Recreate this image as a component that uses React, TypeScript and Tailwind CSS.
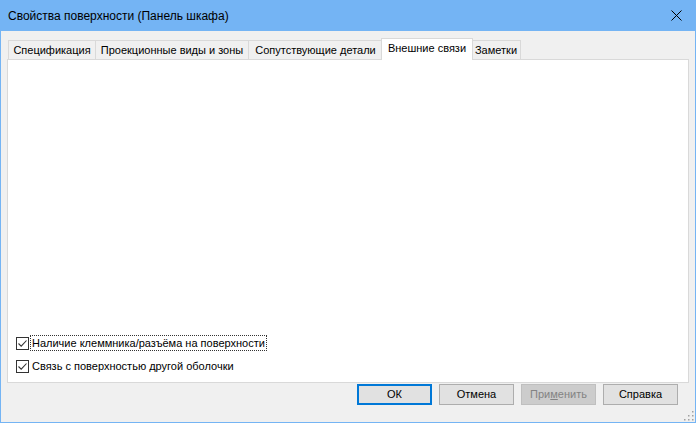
import React from 'react'

const FONT = { fontFamily: '"Liberation Sans", Arial, sans-serif' }

const TABS = [
  { label: 'Спецификация', w: 'w-[88px]' },
  { label: 'Проекционные виды и зоны', w: 'w-[154px]' },
  { label: 'Сопутствующие детали', w: 'w-[135px]' },
  { label: 'Внешние связи', w: 'w-[92px]', active: true },
  { label: 'Заметки', w: 'w-[50px]' },
]

function CheckBox({ label, focused }: { label: string; focused?: boolean }) {
  return (
    <div className="flex items-center h-[16px]">
      <div className="w-[13px] h-[13px] border border-[#333333] bg-white flex items-center justify-center">
        <svg width="11" height="11" viewBox="0 0 11 11">
          <path d="M1.5 5.5 L4.2 8.2 L9.5 2.5" fill="none" stroke="#333333" strokeWidth="1.1" />
        </svg>
      </div>
      <span
        className={
          'ml-[2px] px-[1px] leading-[14px] text-[11px] text-black whitespace-nowrap ' +
          (focused ? 'outline outline-1 outline-dotted outline-[#333333]' : '')
        }
      >
        {label}
      </span>
    </div>
  )
}

function Button({ label, primary, disabled }: { label: React.ReactNode; primary?: boolean; disabled?: boolean }) {
  let cls = 'w-[75px] h-[21px] flex items-center justify-center text-[11px] '
  if (primary) cls += 'bg-[#e1e1e1] border-2 border-[#0078d7] text-black'
  else if (disabled) cls += 'bg-[#cccccc] border border-[#bfbfbf] text-[#838383]'
  else cls += 'bg-[#e1e1e1] border border-[#adadad] text-black'
  return <div className={cls}>{label}</div>
}

export default function App() {
  return (
    <div style={FONT} className="w-[696px] h-[423px] bg-[#74b4f4] flex flex-col overflow-hidden">
      <div className="h-[31px] flex items-center justify-between pl-[8px] pr-[10px] shrink-0">
        <span className="text-[12px] text-black">Свойства поверхности (Панель шкафа)</span>
        <svg width="11" height="11" viewBox="0 0 11 11" className="mr-[4px]">
          <path d="M0.5 0.5 L10.5 10.5 M10.5 0.5 L0.5 10.5" stroke="#000" strokeWidth="1" />
        </svg>
      </div>
      <div className="flex-1 mx-[1px] mb-[1px] bg-[#f0f0f0] flex flex-col relative">
        <div className="pt-[6px] pl-[7px] pr-[6px] flex items-end h-[28px]">
          {TABS.map((t, i) =>
            t.active ? (
              <div
                key={i}
                className={`${t.w} h-[22px] -mb-[1px] -ml-[2px] -mr-[1px] relative z-10 bg-white border border-b-0 border-[#d9d9d9] flex items-center justify-center text-[11px] text-black whitespace-nowrap pb-[3px]`}
              >
                {t.label}
              </div>
            ) : (
              <div
                key={i}
                className={`${t.w} h-[19px] bg-[#f0f0f0] border border-b-0 border-[#d9d9d9] ${i > 0 ? '-ml-[1px]' : ''} flex items-center justify-center text-[11px] text-black whitespace-nowrap`}
              >
                {t.label}
              </div>
            )
          )}
        </div>
        <div className="mx-[6px] h-[324px] bg-white border border-[#d9d9d9] flex flex-col justify-end gap-[7px] pl-[8px] pb-[8px]">
          <CheckBox label="Наличие клеммника/разъёма на поверхности" focused />
          <CheckBox label="Связь с поверхностью другой оболочки" />
        </div>
        <div className="flex justify-end gap-[7px] pr-[17px] pt-[1px]">
          <Button label="ОК" primary />
          <Button label="Отмена" />
          <Button
            label={
              <span>
                При<span className="underline">м</span>енить
              </span>
            }
            disabled
          />
          <Button label="Справка" />
        </div>
        <svg width="12" height="12" viewBox="0 0 12 12" className="absolute right-[1px] bottom-[1px]">
          {[
            [10, 2], [10, 6], [6, 6], [10, 10], [6, 10], [2, 10],
          ].map(([x, y], i) => (
            <rect key={i} x={x} y={y} width="1.5" height="1.5" fill="#a0a0a0" />
          ))}
        </svg>
      </div>
    </div>
  )
}
